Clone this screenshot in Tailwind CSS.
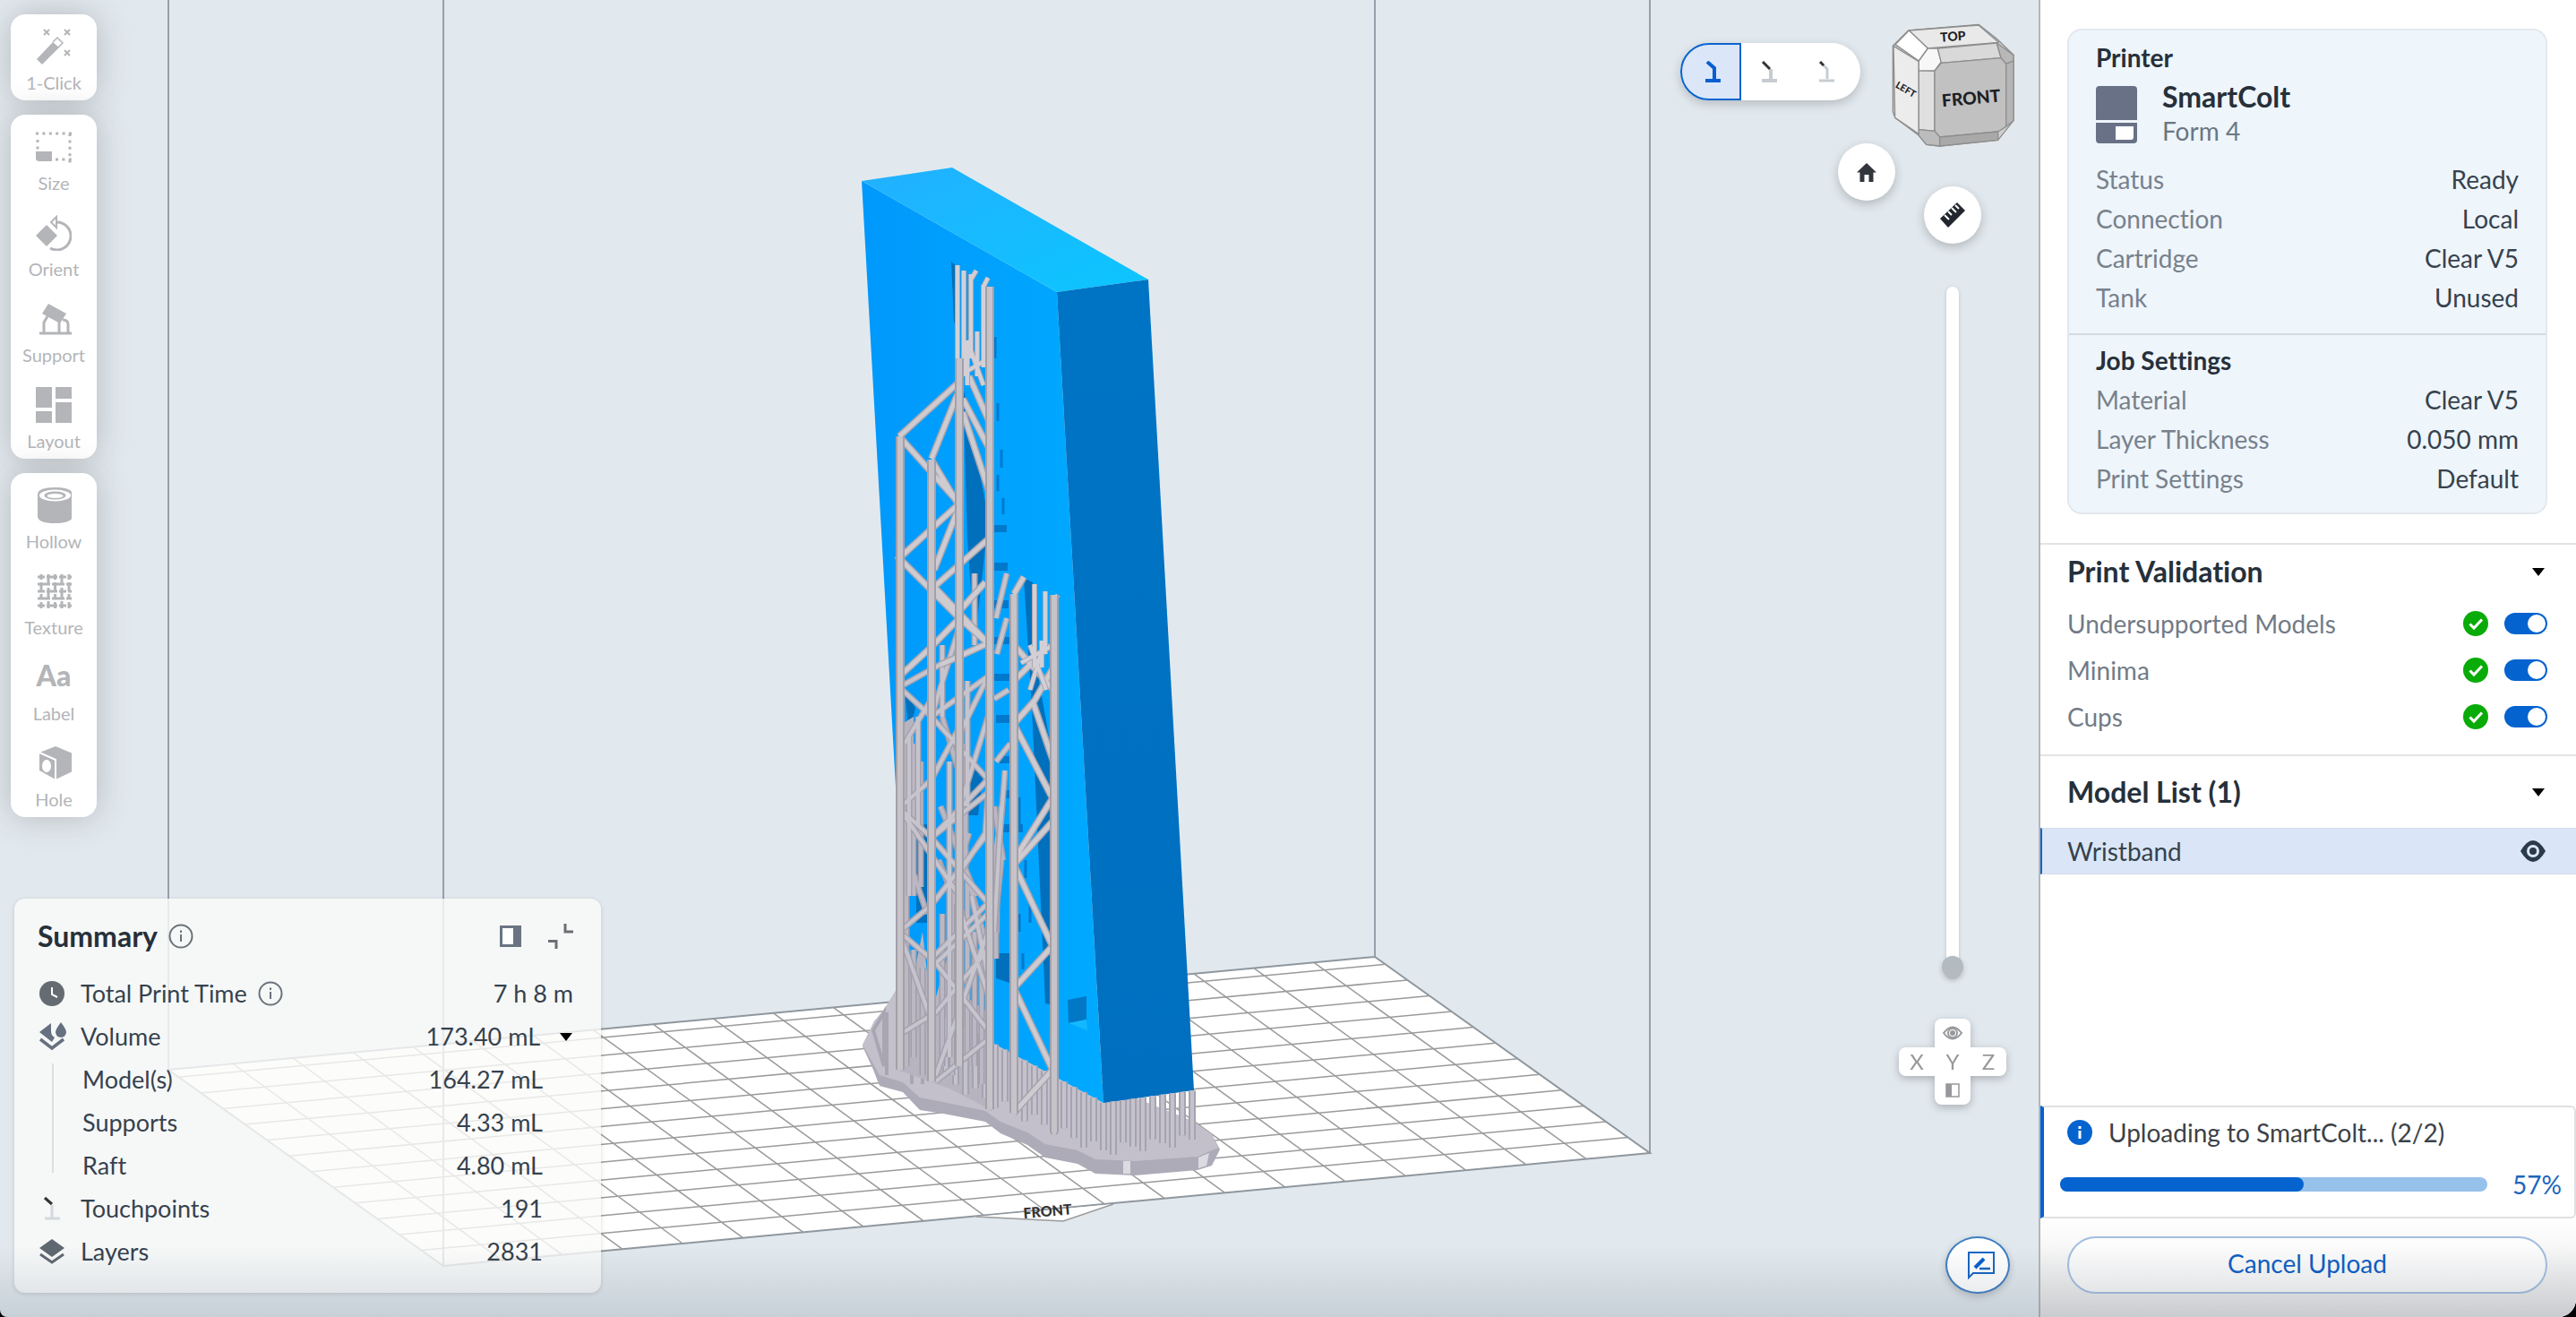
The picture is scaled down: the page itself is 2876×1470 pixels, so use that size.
<!DOCTYPE html>
<html lang="en">
<head>
<meta charset="utf-8">
<title>Print preparation</title>
<script src="https://cdn.jsdelivr.net/npm/@tailwindcss/browser@4"></script>
</head>
<body class="bg-black font-['Lato',sans-serif] [font-variant-ligatures:none] text-[28px] leading-[44px] text-[#36424d]">
<div class="relative flex h-screen overflow-hidden rounded-bl-lg rounded-br-[20px] bg-[#e2e9ee]">

  <!-- 3D viewport -->
  <main class="relative min-w-0 flex-1 overflow-hidden">
    <svg class="absolute inset-0 size-full" viewBox="0 0 2276 1470" preserveAspectRatio="xMidYMid slice" aria-label="Build volume">
      <defs>
        <linearGradient id="front" x1="0" y1="0" x2="1" y2="0"><stop offset="0" stop-color="#0098fc"/><stop offset="1" stop-color="#00aaff"/></linearGradient>
        <linearGradient id="top" x1="0" y1="0" x2="1" y2="1"><stop offset="0" stop-color="#22b0ff"/><stop offset="1" stop-color="#0cc6ff"/></linearGradient>
        <linearGradient id="side" x1="0" y1="0" x2="0" y2="1"><stop offset="0" stop-color="#0074c4"/><stop offset="1" stop-color="#006fc0"/></linearGradient>
        <path id="columns" d="M1005 487V1194M1040 513V1207M1071 400V1190M1105 320V1238M1132 663V1242M1177 664V1264"/>
        <path id="braces" d="M1004 487L1069 428M1004 487L1071 562L1004 623L1071 690L1103 718M1040 512L1069 440M1040 513L1071 565L1043 636M1043 655L1103 602M1043 655L1103 718L1050 742M1075 445L1104 500M1075 460L1104 548M1082 420L1104 470M1073 680L1100 650M1071 690L1040 722L1004 755
          M1132 663L1143 644M1132 720L1176 770M1132 760L1172 720M1132 808L1155 782L1176 745M1153 783L1176 850M1132 808L1175 891L1132 960M1132 965L1175 917M1132 965L1175 1056L1132 1103L1175 1194L1132 1242"/>
        <path id="mesh" d="M1004 767L1071 730M1004 767L1040 800L1103 870M1040 800L1103 755L1071 820M1040 800L1071 700M1010 830L1040 780M1004 902L1040 870L1071 812M1004 902L1040 935L1103 870M1040 935L1103 885L1100 930L1071 975M1004 902L1071 1000M1040 935L1103 1008L1040 1070M1004 1040L1040 1010L1103 930M1004 1040L1045 1075L1103 1150M1045 1075L1103 1020M1004 1040L1040 1140M1045 1200L1103 1040M1004 1155L1045 1130L1103 1060M1045 1207L1103 1160M1015 820V1000M1025 800V920M1060 850V1180M1080 760V900M1085 1000L1103 1090M1070 1010L1103 1110M1052 720V800M1088 640V720M1072 900L1103 800M1112 690L1124 640M1110 780L1126 770M1112 850L1128 830M1115 950L1122 860M1110 1040L1118 900M1113 730L1124 690"/>
        <path id="depth" d="M1012 820V1190M1020 830V1000M1028 850V990M1020 1060V1180M1030 1080V1200M1052 1020V1190M1063 980V1200M1080 980V1180M1088 1040V1190M1096 1060V1210M1015 960L1035 1020M1060 980L1095 1080M1075 960L1100 1050M1050 900L1090 1000M1048 960L1068 1010M1082 930L1060 1000M1078 830V980M1052 800L1070 860M1110 900L1120 960M1112 960V1070M1118 960L1108 1060"/>
        <path id="tips" d="M1069 296V430M1076 302V420M1084 306V400M1090 302L1084 312M1098 318V390M1103 310L1098 320M1105 320V400M1091 370V420M1080 380L1098 430M1070 420L1104 400M1080 380V430M1098 370V410M1155 652V730M1167 660V730M1181 664L1176 672M1150 720L1168 770M1165 720L1150 770M1140 740L1176 720M1155 715V745M1163 715V745"/>
      </defs>

      <path d="M188 0V1194M495 0V1413M1535 0V1068M1842 0V1287" fill="none" stroke="#95a0aa" stroke-width="2"/>
      <path d="M188 1194L1535 1068L1842 1287L495 1413Z" fill="#fff" stroke="#8f979e" stroke-width="2"/>
      <path id="grid" fill="none" stroke="#9a9a9a" stroke-width="1.5"/>
      <path d="M495 0V1413" stroke="#95a0aa" stroke-width="2"/>
      <path d="M1090 1358L1187 1363L1243 1344" fill="#fff" stroke="#9a9a9a" stroke-width="1.5"/>
      <text x="1143" y="1360" transform="rotate(-5 1143 1360)" font-family="Lato, sans-serif" font-size="16" font-weight="900" fill="#333">FRONT</text>

      <!-- raft -->
      <path d="M963 1168L976 1140L987 1127L1000 1106L1060 1110L1180 1190L1333 1252L1353 1266L1362 1283L1353 1301L1337 1306L1267 1312L1223 1310L1203 1299L1167 1292L1147 1278L1117 1265L1100 1252L1053 1243L1027 1239L1008 1219L982 1212L975 1194Z" fill="#aeabb8"/>
      <path d="M963 1166L976 1140L987 1127L1000 1106L1060 1110L1180 1190L1333 1252L1353 1266L1360 1281L1337 1291L1267 1296L1223 1294L1203 1284L1167 1277L1147 1264L1117 1252L1100 1240L1053 1230L1027 1225L1008 1208L982 1200Z" fill="#c3c0cb"/>
      <path d="M1254 1296h8v14h-8zM1338 1292l12-5-3 14-9 3z" fill="#dddbe2"/>
      <path d="M975 1150l12-20v60zM990 1130v70M1018 1130v80M1030 1150v60" stroke="#a9a6b3" stroke-width="4" fill="none"/>

      <!-- model -->
      <path d="M962 202L1180 326L1232 1231L1182 1204L1108 1164L1053 1130L1010 1106L1000 878Z" fill="url(#front)"/>
      <path d="M962 202L1063 187L1282 312L1180 326Z" fill="url(#top)"/>
      <path d="M1180 326L1282 312L1333 1217L1232 1231Z" fill="url(#side)"/>
      <path d="M1062 292L1072 300V370L1065 360ZM1075 430L1100 560V612L1088 720L1080 600ZM1143 645L1153 650L1160 760L1176 850V1122L1167 1120L1152 790ZM1010 770L1022 790L1015 820ZM1023 920h12v110h-12zM1080 860h18l-6 50h-12zM1112 1064h18v34l-18-6z" fill="#0070bc"/>
      <path d="M1110 586h14v8h-14zM1110 628h15v9h-15zM1110 670h16v9h-16zM1110 711h18v8h-18zM1110 752h20v8h-20zM1112 798h18v9h-18zM1116 844h14v8h-14zM1118 882h18v9h-18zM1120 920h22v9h-22z" fill="#0079cd"/>
      <path d="M1111 376v24M1114 450v20M1118 502v20M1114 530v18M1120 556v18M1138 890v30M1145 960v20M1138 1020v20M1150 1000v30M1142 1064v18" stroke="#0079cd" stroke-width="3"/>
      <path d="M1192 1116L1213 1112V1138L1193 1142Z" fill="#0078c6"/>
      <path d="M1193 1142L1213 1138L1214 1150Z" fill="#14b8ff"/>

      <!-- supports -->
      <path d="M1004 810L1020 800V900L1014 960V1060L1022 1080L1030 1040L1040 1130L1060 1060L1075 1110L1103 1130L1108 1164V1240L1060 1215L1004 1195ZM1108 960L1118 880L1116 1040L1108 1070Z" fill="#b7b4c0"/>
      <path id="stubs-dark" fill="none" stroke="#a6a3b0" stroke-width="8"/>
      <path id="stubs-light" fill="none" stroke="#c4c2cc" stroke-width="4"/>
      <use href="#depth" fill="none" stroke="#a19eab" stroke-width="7"/>
      <use href="#depth" fill="none" stroke="#bbb8c3" stroke-width="4"/>
      <use href="#mesh" fill="none" stroke="#a5a2ae" stroke-width="7"/>
      <use href="#mesh" fill="none" stroke="#c6c4cd" stroke-width="4"/>
      <use href="#braces" fill="none" stroke="#a7a4ae" stroke-width="8"/>
      <use href="#braces" fill="none" stroke="#cecbd1" stroke-width="5"/>
      <use href="#tips" fill="none" stroke="#a9a6b0" stroke-width="6"/>
      <use href="#tips" fill="none" stroke="#d2d0d6" stroke-width="4"/>
      <use href="#columns" fill="none" stroke="#a3a0aa" stroke-width="10"/>
      <use href="#columns" fill="none" stroke="#c6c3c9" stroke-width="6"/>
    </svg>

    <!-- tool bar -->
    <nav class="absolute top-4 left-3 flex w-24 flex-col gap-4 text-xl leading-6 text-[#b3b5b8]" aria-label="Tools">
      <div class="rounded-2xl bg-white shadow-[0_0_36px_rgba(60,60,60,0.28)]">
        <button class="flex h-24 w-full flex-col items-center gap-2 pt-4">
          <svg class="size-10" viewBox="0 0 40 40" fill="none" stroke="currentColor"><path d="M1 34L19 15L26 21L7 40Z" fill="currentColor" stroke="none"/><path d="M19 15L24 10L30 16L25 21" stroke-width="1.5"/><path d="M9 1l6 6M15 1L9 7M32 1l6 6M38 1l-6 6M32 24l6 6M38 24l-6 6" stroke-width="2"/></svg>
          <span>1-Click</span></button>
      </div>
      <div class="rounded-2xl bg-white shadow-[0_0_36px_rgba(60,60,60,0.28)]">
        <button class="flex h-24 w-full flex-col items-center gap-2 pt-4">
          <svg class="size-10" viewBox="0 0 40 40" fill="none" stroke="currentColor"><path d="M0 5H40M38 5V38M2 12V24M22 34H40" stroke-width="3" stroke-dasharray="3 4.400"/><path d="M0 25h18v11H4q-4 0-4-3z" fill="currentColor" stroke="none"/></svg>
          <span>Size</span></button>
        <button class="flex h-24 w-full flex-col items-center gap-2 pt-4">
          <svg class="size-10" viewBox="0 0 40 40" fill="none" stroke="currentColor"><path d="M0 23L12 11L24 23L12 35Z" fill="currentColor" stroke="none"/><path d="M22 8A15.500 15.500 0 1 1 16 37" stroke-width="3"/><path d="M17 8L23 2V14Z" stroke-width="2"/></svg>
          <span>Orient</span></button>
        <button class="flex h-24 w-full flex-col items-center gap-2 pt-4">
          <svg class="size-10" viewBox="0 0 40 40" fill="none" stroke="currentColor"><path d="M14 3L34 14L27 25L7 14Z" fill="currentColor" stroke="none"/><path d="M4 36H40M9 36V24L13 17M26 36V24M36 36V26Q36 21 30 21" stroke-width="3"/></svg>
          <span>Support</span></button>
        <button class="flex h-24 w-full flex-col items-center gap-2 pt-4">
          <svg class="size-10" viewBox="0 0 40 40" fill="currentColor"><path d="M0 0H18V23H0ZM22 0H40V13H22ZM0 27H18V40H0ZM22 17H40V40H22Z"/></svg>
          <span>Layout</span></button>
      </div>
      <div class="rounded-2xl bg-white shadow-[0_0_36px_rgba(60,60,60,0.28)]">
        <button class="flex h-24 w-full flex-col items-center gap-2 pt-4">
          <svg class="size-10" viewBox="0 0 40 40" fill="currentColor"><path d="M2 8V32Q2 40 21.500 40T41 32V8Q41 0 21.500 0T2 8Z"/><ellipse cx="21.500" cy="9" rx="17.500" ry="6.500" fill="#fff"/><ellipse cx="21.500" cy="9" rx="12" ry="4.500"/><ellipse cx="21.500" cy="9.500" rx="9" ry="2.500" fill="#fff"/></svg>
          <span>Hollow</span></button>
        <button class="flex h-24 w-full flex-col items-center gap-2 pt-4">
          <svg class="size-10" viewBox="0 0 40 40" fill="none" stroke="currentColor" stroke-width="3"><path d="M2 4H40M2 20H40M2 36H40" stroke-dasharray="8 2 12 2"/><path d="M2 12H40M2 28H40" stroke-dasharray="14 2"/><path d="M6 1V39M21.500 1V39M37 1V39" stroke-dasharray="6 3 10 3"/><path d="M14 1V39M29 1V39" stroke-dasharray="12 3"/></svg>
          <span>Texture</span></button>
        <button class="flex h-24 w-full flex-col items-center gap-2 pt-4">
          <b class="h-10 text-[32px] leading-9 font-black">Aa</b>
          <span>Label</span></button>
        <button class="flex h-24 w-full flex-col items-center gap-2 pt-4">
          <svg class="size-10" viewBox="0 0 40 40" fill="currentColor"><path d="M22 1L41 9V29L22 38L4 28V8Z"/><path d="M4 8L22 16V38" fill="none" stroke="#fff" stroke-width="2"/><ellipse cx="12" cy="23" rx="5" ry="7" fill="#fff"/></svg>
          <span>Hole</span></button>
      </div>
    </nav>

    <!-- touchpoint visibility -->
    <div class="absolute top-12 right-[199px] flex h-16 rounded-full bg-white pr-[5px] shadow-[0_4px_12px_rgba(0,0,0,0.2)]" role="group" aria-label="Touchpoint view">
      <button class="flex w-[68px] items-center justify-center rounded-l-full border-2 border-[#0a63cf] bg-[#dbe7f8] pl-1.5" aria-pressed="true" aria-label="All">
        <svg class="h-6 w-5" viewBox="0 0 20 24" fill="none" stroke="#0a5fd0"><path d="M3 1L11 8V20" stroke-width="4"/><path d="M1 22H18" stroke-width="4"/></svg></button>
      <button class="flex w-16 items-center justify-center" aria-label="Tips">
        <svg class="h-6 w-5" viewBox="0 0 20 24" fill="none"><path d="M11 9V20M1 22H18" stroke="#c6ccd2" stroke-width="4"/><path d="M2 1L10 9" stroke="#333" stroke-width="3"/></svg></button>
      <button class="flex w-16 items-center justify-center" aria-label="Contacts">
        <svg class="h-6 w-5" viewBox="0 0 20 24" fill="none"><path d="M5 4L10 9V20M1 22H18" stroke="#c6ccd2" stroke-width="3"/><path d="M2 1L6 5" stroke="#333" stroke-width="3"/></svg></button>
    </div>

    <!-- view cube -->
    <svg class="absolute top-[23px] right-[22px] h-[143px] w-[147px]" viewBox="799 70 441 429" stroke="#8e8e8e" stroke-width="4" stroke-linejoin="round" aria-label="View cube">
      <path d="M870 103L1105 83L1165 130L1222 185V405L1170 470L975 490L930 485L905 455L825 395L818 375V155Z" fill="#d0d0d0"/>
      <path d="M872 103L1105 85L1172 143L935 163Z" fill="#e9e9e9"/>
      <path d="M872 103L935 163L905 205L826 150Z" fill="#fff"/>
      <path d="M820 155L905 207V450L825 395Z" fill="#ececec"/>
      <path d="M905 235L958 238V440L905 435Z" fill="#e0e0e0"/>
      <path d="M935 163L968 163L980 208L958 238H905V205Z" fill="#f7f7f7"/>
      <path d="M968 163L1166 145L1180 195L980 212Z" fill="#d9d9d9"/>
      <path d="M1166 145L1222 185V205L1197 215L1180 195Z" fill="#b8b8b8"/>
      <path d="M980 212L1180 195L1197 215V425L1170 442L975 460L958 440V238Z" fill="#c1c1c1"/>
      <path d="M1197 215L1222 205V405L1197 425Z" fill="#b5b5b5"/>
      <path d="M905 435L958 440L975 460V490L930 485L905 455Z" fill="#bcbcbc"/>
      <path d="M975 460L1170 442V470L975 490Z" fill="#a9a9a9"/>
      <g fill="#1d1f26" stroke="none" font-weight="900" text-anchor="middle" font-family="Lato, sans-serif">
        <text x="1080" y="350" font-size="58" transform="rotate(-5 1080 330)">FRONT</text>
        <text x="1019" y="138" font-size="42" transform="rotate(-4 1019 124)">TOP</text>
        <text x="862" y="312" font-size="32" transform="rotate(30 862 300)">LEFT</text>
      </g>
    </svg>

    <button class="absolute top-40 right-40 flex size-16 items-center justify-center rounded-full bg-white shadow-[0_4px_12px_rgba(0,0,0,0.22)]" aria-label="Home view">
      <svg class="size-6" viewBox="0 0 24 24" fill="#32353c"><path d="M12 2L23 12.500H19.500V23H14.500V15H9.500V23H4.500V12.500H1Z"/></svg></button>
    <button class="absolute top-52 right-16 flex size-16 items-center justify-center rounded-full bg-white shadow-[0_4px_12px_rgba(0,0,0,0.22)]" aria-label="Measure">
      <svg class="size-8" viewBox="0 0 32 32"><path d="M2 20L21 2L30 11L11 30Z" fill="#22262e"/><path d="M7 16l5 5M11 12l4 4M15 8l5 5M19 5l4 4" stroke="#fff" stroke-width="2"/></svg></button>

    <input type="range" min="0" max="2831" value="0" aria-label="Layer" class="absolute top-[320px] right-[89px] h-[771px] w-[14px] appearance-none rounded-full bg-white shadow-[0_1px_4px_rgba(0,0,0,0.18)] [direction:rtl] [writing-mode:vertical-lr] [&::-webkit-slider-thumb]:size-6 [&::-webkit-slider-thumb]:appearance-none [&::-webkit-slider-thumb]:rounded-full [&::-webkit-slider-thumb]:bg-[#b3bac0] [&::-webkit-slider-thumb]:shadow-[0_3px_6px_rgba(0,0,0,0.2)]">

    <div class="absolute top-[1137px] right-9 grid grid-cols-3 text-2xl leading-8 text-[#96989b] drop-shadow-[0_3px_5px_rgba(0,0,0,0.25)]">
      <button class="col-start-2 flex h-8 w-10 items-center justify-center rounded-t-lg bg-white" aria-label="Visibility">
        <svg class="h-5 w-6" viewBox="0 0 24 20" fill="none" stroke="currentColor" stroke-width="2"><path d="M2 10Q12-3 22 10Q12 23 2 10Z"/><circle cx="12" cy="10" r="5"/><circle cx="12" cy="10" r="2" fill="currentColor"/></svg></button>
      <button class="col-start-1 h-8 w-10 rounded-l-lg bg-white">X</button>
      <button class="h-8 w-10 bg-white">Y</button>
      <button class="h-8 w-10 rounded-r-lg bg-white">Z</button>
      <button class="col-start-2 flex h-8 w-10 items-center justify-center rounded-b-lg bg-white" aria-label="Section view">
        <svg class="size-4" viewBox="0 0 16 16"><path d="M1 1H15V15H1Z" fill="none" stroke="currentColor" stroke-width="1.500"/><path d="M1 1H7V15H1Z" fill="currentColor"/></svg></button>
    </div>

    <!-- summary -->
    <section class="absolute bottom-[27px] left-4 w-[655px] rounded-xl bg-[#fbfbfa]/80 pt-[18px] pr-[31px] pb-[22px] pl-[26px] text-[27px] leading-[48px] shadow-[0_1px_5px_rgba(0,0,0,0.15)]">
      <header class="flex h-12 items-center">
        <h2 class="text-[32px] font-bold text-[#26303a]">Summary</h2>
        <svg class="ml-3 size-7 text-[#6b727a]" viewBox="0 0 28 28" fill="none" stroke="currentColor" stroke-width="2"><circle cx="14" cy="14" r="12.500"/><path d="M14 12V20M14 7.500V10"/></svg>
        <button class="ml-auto" aria-label="Dock panel"><svg class="size-6 text-[#6a7482]" viewBox="0 0 24 24"><path d="M1.500 1.500H22.500V22.500H1.500Z" fill="#fff" stroke="currentColor" stroke-width="3"/><path d="M15 1H23V23H15Z" fill="currentColor"/></svg></button>
        <button class="ml-[30px]" aria-label="Collapse"><svg class="size-7 text-[#6b6f74]" viewBox="0 0 28 28" fill="none" stroke="currentColor" stroke-width="3"><path d="M19 0V9H28M0 19.500H9V28"/></svg></button>
      </header>
      <dl class="mt-4">
        <div class="flex h-12 items-center">
          <svg class="mr-4 size-8 text-[#646b73]" viewBox="0 0 32 32"><circle cx="16" cy="16" r="14" fill="currentColor"/><path d="M16 9V17L22 20" fill="none" stroke="#fff" stroke-width="2"/></svg>
          <dt class="flex items-center">Total Print Time
            <svg class="ml-3 size-7 text-[#6b727a]" viewBox="0 0 28 28" fill="none" stroke="currentColor" stroke-width="2"><circle cx="14" cy="14" r="12.500"/><path d="M14 12V20M14 7.500V10"/></svg></dt>
          <dd class="ml-auto">7 h 8 m</dd>
        </div>
        <div class="flex h-12 items-center">
          <svg class="mr-4 size-8 text-[#667080]" viewBox="0 0 32 32"><path d="M15 1V10Q15 15 19 17L16 22L2 11Z" fill="currentColor"/><path d="M26 0Q32 8 32 11A6 6 0 0 1 20 11Q20 8 26 0Z" fill="currentColor"/><path d="M3 19L16 29L29 19" fill="none" stroke="currentColor" stroke-width="3.500"/></svg>
          <dt>Volume</dt><dd class="ml-auto">173.40 mL</dd>
          <button class="ml-[21px]" aria-label="Volume details"><svg class="h-[10px] w-4" viewBox="0 0 16 10"><path d="M1 1H15L8 10Z"/></svg></button>
        </div>
        <div class="relative pr-[34px] pl-[50px] before:absolute before:top-1.5 before:bottom-4 before:left-4 before:w-0.5 before:bg-[#dcdfe1]">
          <div class="flex justify-between"><dt>Model(s)</dt><dd>164.27 mL</dd></div>
          <div class="flex justify-between"><dt>Supports</dt><dd>4.33 mL</dd></div>
          <div class="flex justify-between"><dt>Raft</dt><dd>4.80 mL</dd></div>
        </div>
        <div class="flex h-12 items-center pr-[34px]">
          <svg class="mr-4 size-8" viewBox="0 0 32 32" fill="none"><path d="M16 12V27M8 27H25" stroke="#d5d9dc" stroke-width="3"/><path d="M8 4L16 11" stroke="#333" stroke-width="3"/></svg>
          <dt>Touchpoints</dt><dd class="ml-auto">191</dd>
        </div>
        <div class="flex h-12 items-center pr-[34px]">
          <svg class="mr-4 size-8 text-[#5f6870]" viewBox="0 0 32 32"><path d="M16 2L30 12L16 22L2 12Z" fill="currentColor"/><path d="M3 19L16 28L29 19" fill="none" stroke="currentColor" stroke-width="3"/></svg>
          <dt>Layers</dt><dd class="ml-auto">2831</dd>
        </div>
      </dl>
    </section>

    <button class="absolute right-8 bottom-[26px] flex h-16 w-[72px] items-center justify-center rounded-[50%] border-2 border-[#3f7fc4] bg-white pl-2 shadow-[0_3px_8px_rgba(0,0,0,0.2)]" aria-label="Feedback">
      <svg class="size-8" viewBox="0 0 32 32" fill="none" stroke="#1766c4" stroke-width="2"><path d="M2 30V2H30V25H7Z"/><path d="M9 19L19 9" stroke="#0a5fd0" stroke-width="4"/><path d="M14 20H26" stroke-width="2.500"/></svg></button>
  </main>

  <!-- job panel -->
  <aside class="flex w-[600px] shrink-0 flex-col border-l-2 border-[#b4b6b8] bg-white">
    <div class="py-8 pr-8 pl-[30px]">
      <div class="rounded-2xl border-2 border-[#e2e8ee] bg-[#eef5fb]">
        <section class="border-b-2 border-[#d3dbe0] px-[30px] pt-2 pb-[18px]">
          <h2 class="font-bold text-[#26303a]">Printer</h2>
          <div class="mt-1 mb-3 flex h-[76px] items-center gap-7">
            <svg class="h-16 w-[46px] text-[#687185]" viewBox="0 0 46 64" fill="currentColor"><path d="M0 4Q0 0 4 0H42Q46 0 46 4V38H0ZM0 41H46V60Q46 64 42 64H4Q0 64 0 60Z"/><path d="M22 45H42V57Q42 60 39 60H22Z" fill="#fff"/></svg>
            <div class="pb-1"><h3 class="text-[32px] leading-10 font-bold text-[#26303a]">SmartColt</h3><p class="leading-9 text-[#6b7683]">Form 4</p></div>
          </div>
          <dl>
            <div class="flex justify-between"><dt class="text-[#78818b]">Status</dt><dd>Ready</dd></div>
            <div class="flex justify-between"><dt class="text-[#78818b]">Connection</dt><dd>Local</dd></div>
            <div class="flex justify-between"><dt class="text-[#78818b]">Cartridge</dt><dd>Clear V5</dd></div>
            <div class="flex justify-between"><dt class="text-[#78818b]">Tank</dt><dd>Unused</dd></div>
          </dl>
        </section>
        <section class="px-[30px] pt-1.5 pb-4">
          <h2 class="font-bold text-[#26303a]">Job Settings</h2>
          <dl>
            <div class="flex justify-between"><dt class="text-[#78818b]">Material</dt><dd>Clear V5</dd></div>
            <div class="flex justify-between"><dt class="text-[#78818b]">Layer Thickness</dt><dd>0.050 mm</dd></div>
            <div class="flex justify-between"><dt class="text-[#78818b]">Print Settings</dt><dd>Default</dd></div>
          </dl>
        </section>
      </div>
    </div>

    <section class="border-t-2 border-[#e2e3e4] pt-0.5 pr-8 pb-4 pl-[30px]">
      <button class="mb-1 flex h-14 w-full items-center justify-between pr-0.5"><span class="text-[32px] font-bold text-[#26303a]">Print Validation</span>
        <svg class="h-[10px] w-4" viewBox="0 0 16 10"><path d="M1 1H15L8 10Z"/></svg></button>
      <div class="flex h-[52px] items-center text-[#727b87]">
        <label for="v1" class="flex-1">Undersupported Models</label>
        <svg class="mr-[18px] size-7" viewBox="0 0 28 28"><circle cx="14" cy="14" r="14" fill="#09ab09"/><path d="M7.500 14.500L12 19L21 9.500" fill="none" stroke="#fff" stroke-width="3"/></svg>
        <input id="v1" type="checkbox" checked class="h-6 w-12 appearance-none rounded-full bg-[#9aa4ad] p-0.5 before:block before:size-5 before:rounded-full before:bg-white checked:bg-[#0563cf] checked:before:ml-6">
      </div>
      <div class="flex h-[52px] items-center text-[#727b87]">
        <label for="v2" class="flex-1">Minima</label>
        <svg class="mr-[18px] size-7" viewBox="0 0 28 28"><circle cx="14" cy="14" r="14" fill="#09ab09"/><path d="M7.500 14.500L12 19L21 9.500" fill="none" stroke="#fff" stroke-width="3"/></svg>
        <input id="v2" type="checkbox" checked class="h-6 w-12 appearance-none rounded-full bg-[#9aa4ad] p-0.5 before:block before:size-5 before:rounded-full before:bg-white checked:bg-[#0563cf] checked:before:ml-6">
      </div>
      <div class="flex h-[52px] items-center text-[#727b87]">
        <label for="v3" class="flex-1">Cups</label>
        <svg class="mr-[18px] size-7" viewBox="0 0 28 28"><circle cx="14" cy="14" r="14" fill="#09ab09"/><path d="M7.500 14.500L12 19L21 9.500" fill="none" stroke="#fff" stroke-width="3"/></svg>
        <input id="v3" type="checkbox" checked class="h-6 w-12 appearance-none rounded-full bg-[#9aa4ad] p-0.5 before:block before:size-5 before:rounded-full before:bg-white checked:bg-[#0563cf] checked:before:ml-6">
      </div>
    </section>

    <section class="flex-1 border-t-2 border-[#e2e3e4]">
      <button class="flex h-20 w-full items-center justify-between pr-[34px] pl-[30px]"><span class="text-[32px] font-bold text-[#26303a]">Model List (1)</span>
        <svg class="h-[10px] w-4" viewBox="0 0 16 10"><path d="M1 1H15L8 10Z"/></svg></button>
      <ul><li class="flex h-[52px] items-center justify-between border-y border-l-2 border-y-[#d3dbe6] border-l-[#1464c0] bg-[#dae6f7] pr-[34px] pl-7">Wristband
        <button aria-label="Hide Wristband"><svg class="h-6 w-7" viewBox="0 0 28 24"><path d="M0 12Q14-12 28 12Q14 36 0 12Z" fill="#2b3a49"/><circle cx="14" cy="12" r="5.500" fill="none" stroke="#dae6f7" stroke-width="3"/></svg></button></li></ul>
    </section>

    <section class="flex h-[126px] flex-col rounded-r-md border-2 border-l-4 border-[#e0e1e3] border-l-[#0563cf] pt-1.5" aria-live="polite">
      <p class="flex items-center gap-[18px] pl-[26px] text-[#3c4248]">
        <svg class="size-7" viewBox="0 0 28 28"><circle cx="14" cy="14" r="14" fill="#0563cf"/><path d="M14 12V21M14 7V10" stroke="#fff" stroke-width="3"/></svg>
        Uploading to SmartColt... (2/2)</p>
      <div class="mt-3.5 flex items-center gap-7 pr-3.5 pl-[18px]">
        <div class="h-4 flex-1 rounded-full bg-[#96c1ea]" role="progressbar" aria-label="Upload" aria-valuenow="57"><div class="h-4 rounded-full bg-[#0563cf]" style="width:57%"></div></div>
        <span class="text-[#1d66bd]">57%</span>
      </div>
    </section>
    <footer class="bg-linear-to-b from-white to-[#e4e4e4] pt-5 pr-8 pb-[26px] pl-[30px]">
      <button class="h-16 w-full rounded-full border-2 border-[#a3bedf] bg-white/60 pb-1 text-[#0d5fc4]">Cancel Upload</button>
    </footer>
  </aside>
  <div class="pointer-events-none absolute inset-x-0 bottom-0 h-20 bg-linear-to-b from-transparent to-slate-700/15"></div>
</div>

<script>
  // Build plate grid: interpolate each family of lines between opposite plate edges.
  let d = '';
  for (let k = 0; k < 12; k++) {
    const t = 0.038 + 0.0802 * k;
    d += `M${188 + 307 * t} ${1194 + 219 * t}L${1535 + 307 * t} ${1068 + 219 * t}`;
  }
  for (let k = 0; k < 19; k++) {
    const a = 1467 - 67.05 * k, b = 1771 - 67.25 * k;
    d += `M${a} ${1194 - 126 * (a - 188) / 1347}L${b} ${1413 - 126 * (b - 495) / 1347}`;
  }
  document.getElementById('grid').setAttribute('d', d);

  // Short supports between the raft and the underside of the model.
  let s = '';
  for (let i = 0; i < 26; i++) {
    const x = 1056 + i * 11;
    const top = x < 1232 ? 1231 - (1232 - x) * 0.54 : 1231 - (x - 1232) * 0.139;
    const bottom = x < 1232 ? 1285 - (1232 - x) * 0.45 : 1284 - (x - 1232) * 0.12;
    s += `M${x} ${top}V${bottom + (i % 3) * 6 - 6}`;
  }
  document.getElementById('stubs-dark').setAttribute('d', s);
  document.getElementById('stubs-light').setAttribute('d', s);
</script>
</body>
</html>
